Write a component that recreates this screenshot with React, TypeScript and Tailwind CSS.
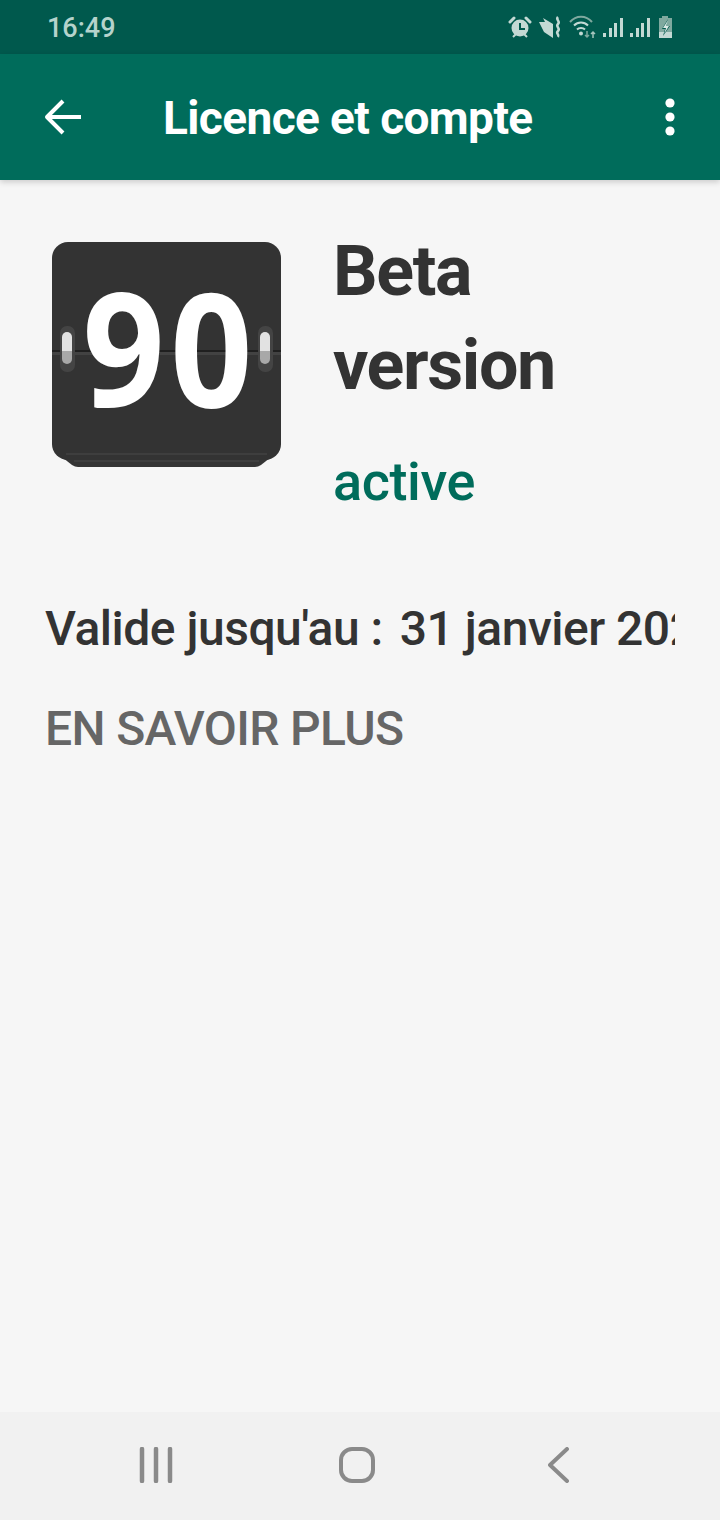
import React from 'react';

const StatusIcons = () => (
  <div className="flex items-center">
    <svg width="24" height="24" viewBox="0 0 24 24" className="mr-[6px]">
      <circle cx="12" cy="13" r="8.5" fill="#c3d9d4" />
      <path d="M12 8v6h5" fill="none" stroke="#00594d" strokeWidth="2" />
      <path d="M2 7l4-4M22 7l-4-4" stroke="#c3d9d4" strokeWidth="3" strokeLinecap="round" />
      <path d="M5 22l3-3M19 22l-3-3" stroke="#c3d9d4" strokeWidth="2" />
    </svg>
    <svg width="24" height="24" viewBox="0 0 24 24" className="mr-[7px]">
      <path d="M1 7h6L5 3l10 6v14L6 17z" fill="#c3d9d4" />
      <path d="M20 2c-3 3 3 4 0 7s3 4 0 7 2 3 0 6" fill="none" stroke="#c3d9d4" strokeWidth="2.5" />
    </svg>
    <svg width="28" height="26" viewBox="0 0 28 26" className="mr-[6px]">
      <path d="M1 8c6-7 16-7 22 0" fill="none" stroke="#7fa99f" strokeWidth="2" />
      <path d="M5 11.5c4-4 10-4 14 0M8 15.5c2-2 6-2 8 0" fill="none" stroke="#c3d9d4" strokeWidth="2" />
      <circle cx="12" cy="19.5" r="2" fill="#c3d9d4" />
      <path d="M18 17v6M16 21l2 2 2-2" fill="none" stroke="#7fa99f" strokeWidth="1.5" />
      <path d="M24 24v-6M22 20l2-2 2 2" fill="none" stroke="#a3c4bc" strokeWidth="1.5" />
    </svg>
    <svg width="20" height="24" viewBox="0 0 20 24" className="mr-[7px]">
      <path d="M0 18h3v4H0zM6 13h3v9H6zM11 8h3v14h-3zM17 3h3v19h-3z" fill="#c3d9d4" />
    </svg>
    <svg width="20" height="24" viewBox="0 0 20 24" className="mr-[8px]">
      <path d="M0 18h3v4H0zM6 13h3v9H6zM11 8h3v14h-3zM17 3h3v19h-3z" fill="#c3d9d4" />
    </svg>
    <svg width="15" height="24" viewBox="0 0 15 24">
      <path d="M4 1h6v2h4v20H1V3h3z" fill="#7fa99f" />
      <path d="M1 17h13v6H1z" fill="#c3d9d4" />
      <path d="M10 4L4 14h3l-2 7 7-10H8z" fill="#00594d" />
      <path d="M10 5L5 13h3l-2 6 5-8H8z" fill="#dcebe7" />
    </svg>
  </div>
);

const FlipClock = () => (
  <div className="relative w-[229px] h-[225px] shrink-0">
    <svg width="229" height="225" viewBox="0 0 229 225" className="absolute inset-0">
      <path d="M6 212l14 11q3 2 6 2H203q3 0 6-2l14-11z" fill="#353535" />
      <rect x="0" y="0" width="229" height="218" rx="16" fill="#333333" />
      <path d="M14 212h201M22 219h185" stroke="#4a4a4a" strokeWidth="1" />
      <rect x="0" y="108" width="229" height="2" fill="#1f1f1f" />
      <rect x="0" y="110" width="229" height="3" fill="#424242" />
      <rect x="8" y="84" width="15" height="46" rx="7" fill="#444444" />
      <rect x="206" y="84" width="15" height="46" rx="7" fill="#444444" />
      <path d="M10 109v-14a5 5 0 0 1 10 0v14z" fill="#e2e2e2" />
      <path d="M10 109v8a5 5 0 0 0 10 0v-8z" fill="#a8a8a8" />
      <path d="M208 109v-14a5 5 0 0 1 10 0v14z" fill="#e2e2e2" />
      <path d="M208 109v8a5 5 0 0 0 10 0v-8z" fill="#a8a8a8" />
    </svg>
    <div className="absolute inset-0 flex items-center justify-center pl-[8px] pb-[18px] font-['Open_Sans',sans-serif] font-bold text-white text-[158px] leading-none tracking-[6px] scale-x-[0.91]">
      90
    </div>
  </div>
);

export default function App() {
  return (
    <div className="w-[720px] h-[1520px] flex flex-col bg-[#f6f6f6] font-['Roboto',sans-serif] overflow-hidden">
      <div className="h-[54px] shrink-0 bg-[#00594d] flex items-center justify-between pl-[47px] pr-[47px]">
        <span className="text-[27px] pt-[3px] font-medium text-[#b5d3cc]">16:49</span>
        <StatusIcons />
      </div>

      <div className="relative h-[126px] shrink-0 bg-[#006c5b] flex items-center pl-[44px] pr-[44px] shadow-[0_2px_6px_rgba(0,0,0,0.18)]">
        <svg width="38" height="38" viewBox="0 0 38 38" className="shrink-0">
          <path d="M37 19H3M19 3L3 19l16 16" fill="none" stroke="#fff" strokeWidth="4" strokeLinejoin="round" />
        </svg>
        <h1 className="ml-[81px] flex-1 pt-[2px] text-[46px] font-bold tracking-[-0.6px] text-white whitespace-nowrap">Licence et compte</h1>
        <svg width="12" height="38" viewBox="0 0 12 38" className="shrink-0">
          <circle cx="6" cy="5" r="4.6" fill="#fff" />
          <circle cx="6" cy="19" r="4.6" fill="#fff" />
          <circle cx="6" cy="33" r="4.6" fill="#fff" />
        </svg>
      </div>

      <main className="flex-1 min-h-0 pl-[45px] pr-[45px]">
        <div className="flex pl-[7px] pt-[62px]">
          <FlipClock />
          <div className="ml-[52px] -mt-[18px]">
            <div className="text-[70px] leading-[94px] font-bold tracking-[-1.4px] text-[#333333]">
              Beta
              <br />
              version
            </div>
            <div className="mt-[40px] text-[54px] leading-[60px] font-medium tracking-[-0.4px] text-[#006c5b]">active</div>
          </div>
        </div>

        <div className="mt-[87px] flex overflow-hidden whitespace-nowrap text-[48px] leading-[60px] font-medium tracking-[-0.5px] text-[#333333]">
          <span>Valide jusqu'au :</span>
          <span className="ml-[17px]">31 janvier 2021</span>
        </div>
        <div className="mt-[40px] text-[48px] leading-[60px] font-medium tracking-[-0.65px] text-[#666666]">EN SAVOIR PLUS</div>
      </main>

      <div className="h-[108px] shrink-0 bg-[#f1f1f1] flex items-center pl-[139px] pb-[2px]">
        <svg width="34" height="36" viewBox="0 0 34 36">
          <path d="M3 2v32M17 2v32M31 2v32" stroke="#8a8a8a" strokeWidth="4.5" strokeLinecap="round" />
        </svg>
        <svg width="36" height="36" viewBox="0 0 36 36" className="ml-[166px]">
          <rect x="2" y="2" width="32" height="32" rx="11" fill="none" stroke="#8a8a8a" strokeWidth="4" />
        </svg>
        <svg width="21" height="36" viewBox="0 0 21 36" className="ml-[173px]">
          <path d="M19 2L2 18l17 16" fill="none" stroke="#8a8a8a" strokeWidth="4" strokeLinecap="round" strokeLinejoin="round" />
        </svg>
      </div>
    </div>
  );
}
